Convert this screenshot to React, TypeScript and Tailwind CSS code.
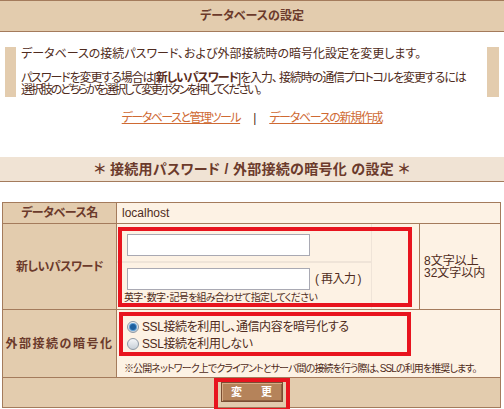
import React from 'react'

function Radio({ checked }: { checked?: boolean }) {
  return (
    <span className="w-[12px] h-[12px] rounded-full border border-[#8c98a4] bg-linear-to-b from-[#f4f6f8] to-[#c8d0d8] flex items-center justify-center shrink-0">
      {checked && <span className="w-[6px] h-[6px] rounded-full bg-[#1d5f9e] shadow-[0_0_0_1px_#5f9fd6]" />}
    </span>
  )
}

export default function App() {
  return (
    <div className="w-[504px] h-[409px] overflow-hidden bg-white font-['Liberation_Sans','Noto_Sans_CJK_JP',sans-serif] [font-feature-settings:'palt'] text-[12px] leading-[12px] text-[#4f2b20]">
      {/* Header */}
      <div className="h-[32px] border-y border-[#a47b5c] bg-[#e3ccae] flex items-center justify-center font-bold text-[#6b3a2b]">
        データベースの設定
      </div>

      {/* Intro */}
      <div className="mt-[15px] mx-[5px] h-[50px] border-l-[11px] border-r-[12px] border-[#e3ccae] pl-[5px] pt-px whitespace-nowrap">
        <p>データベースの接続パスワード、および外部接続時の暗号化設定を変更します。</p>
        <p className="mt-[12px] tracking-[-1.1px]">
          パスワードを変更する場合は[<b className="text-[#5a2e22]">新しいパスワード</b>]を入力、 接続時の通信プロトコルを変更するには
        </p>
        <p className="tracking-[-2.1px]">選択肢のどちらかを選択して変更ボタンを押してください。</p>
      </div>

      {/* Links */}
      <div className="mt-[15px] h-[12px] flex items-center justify-center">
        <a className="underline text-[#cf6a33] tracking-[-1.5px]">データベースと管理ツール</a>
        <span className="mx-[13px]">|</span>
        <a className="underline text-[#cf6a33] tracking-[-1.3px]">データベースの新規作成</a>
      </div>

      {/* Section title */}
      <div className="mt-[33px] h-[25px] border-b border-[#a47b5c] bg-[#f0e3d4] flex items-center justify-center text-[14px] leading-[14px] font-bold text-[#6b3a2b] tracking-[0.3px]">
        ＊ 接続用パスワード / 外部接続の暗号化 の設定 ＊
      </div>

      {/* Table */}
      <div className="mt-[20px] ml-[2px] w-[499px] border border-[#a47b5c]">
        <div className="flex h-[21px] border-b border-[#a47b5c]">
          <div className="w-[114px] shrink-0 border-r border-[#a47b5c] bg-[#e3ccae] flex items-center justify-center font-bold text-[#6b3a2b] tracking-[-0.5px]">
            データベース名
          </div>
          <div className="flex-1 bg-[#fdf2e4] flex items-center pl-[5px]">localhost</div>
        </div>

        <div className="flex h-[86px] border-b border-[#a47b5c]">
          <div className="w-[114px] shrink-0 border-r border-[#a47b5c] bg-[#e3ccae] flex items-center justify-center font-bold text-[#6b3a2b] tracking-[-0.5px]">
            新しいパスワード
          </div>
          <div className="relative flex-1 flex bg-[#fdf2e4]">
            <div className="w-[303px] shrink-0 border-r border-[#a47b5c] flex">
              <div className="w-[255px] shrink-0 border-r border-[#efe4d8] flex flex-col">
                <div className="h-[39px] border-b-2 border-[#efe4d8] pt-[10px] pl-[10px]">
                  <input type="password" className="block w-[183px] h-[22px] border border-[#a9a9b3] bg-white" />
                </div>
                <div className="flex-1 pt-[5px]">
                  <div className="flex items-center pl-[10px]">
                    <input type="password" className="block w-[183px] h-[22px] border border-[#a9a9b3] bg-white" />
                    <span className="ml-[5px]">(</span>
                    <span className="mx-[2px] tracking-[-0.5px]">再入力</span>
                    <span>)</span>
                  </div>
                  <p className="mt-[2px] pl-[7px] text-[10px] leading-[12px] tracking-[-0.75px] whitespace-nowrap">
                    英字･数字･記号を組み合わせて指定してください
                  </p>
                </div>
              </div>
              <div className="flex-1" />
            </div>
            <div className="flex-1 flex flex-col justify-center pl-[4px]">
              <span>8文字以上</span>
              <span>32文字以内</span>
            </div>
            <div className="absolute left-[1px] top-[3px] w-[294px] h-[80px] border-4 border-[#e8141e]" />
          </div>
        </div>

        <div className="flex h-[68px] border-b border-[#a47b5c]">
          <div className="w-[114px] shrink-0 border-r border-[#a47b5c] bg-[#e3ccae] flex items-center justify-center font-bold text-[#6b3a2b] tracking-[1.5px]">
            外部接続の暗号化
          </div>
          <div className="relative flex-1 min-w-0 bg-[#fdf2e4] pt-[8px]">
            <div className="h-[17px] flex items-center pl-[10px]">
              <Radio checked />
              <span className="ml-[3px] tracking-[-0.4px]">SSL接続を利用し、通信内容を暗号化する</span>
            </div>
            <div className="h-[17px] flex items-center pl-[10px]">
              <Radio />
              <span className="ml-[3px] tracking-[-0.4px]">SSL接続を利用しない</span>
            </div>
            <p className="mt-[11px] pl-[7px] text-[10px] leading-[12px] tracking-[-0.9px] whitespace-nowrap">
              ※公開ネットワーク上でクライアントとサーバ間の接続を行う際は、SSLの利用を推奨します。
            </p>
            <div className="absolute left-[2px] top-[2px] w-[292px] h-[44px] border-4 border-[#e8141e]" />
          </div>
        </div>

        <div className="relative h-[29px] bg-[#e3ccae] flex justify-center pt-[4px]">
          <button className="w-[62px] h-[20px] bg-[#b5835a] border border-[#7a4e33] shadow-[inset_1px_1px_0_#d7ab84,inset_-1px_-1px_0_#8e6040] flex items-center justify-center gap-[19px] text-white text-[11px] font-bold">
            <span>変</span>
            <span>更</span>
          </button>
          <div className="absolute left-[211px] top-0 w-[76px] h-[34px] border-4 border-[#e8141e]" />
        </div>
      </div>
    </div>
  )
}
